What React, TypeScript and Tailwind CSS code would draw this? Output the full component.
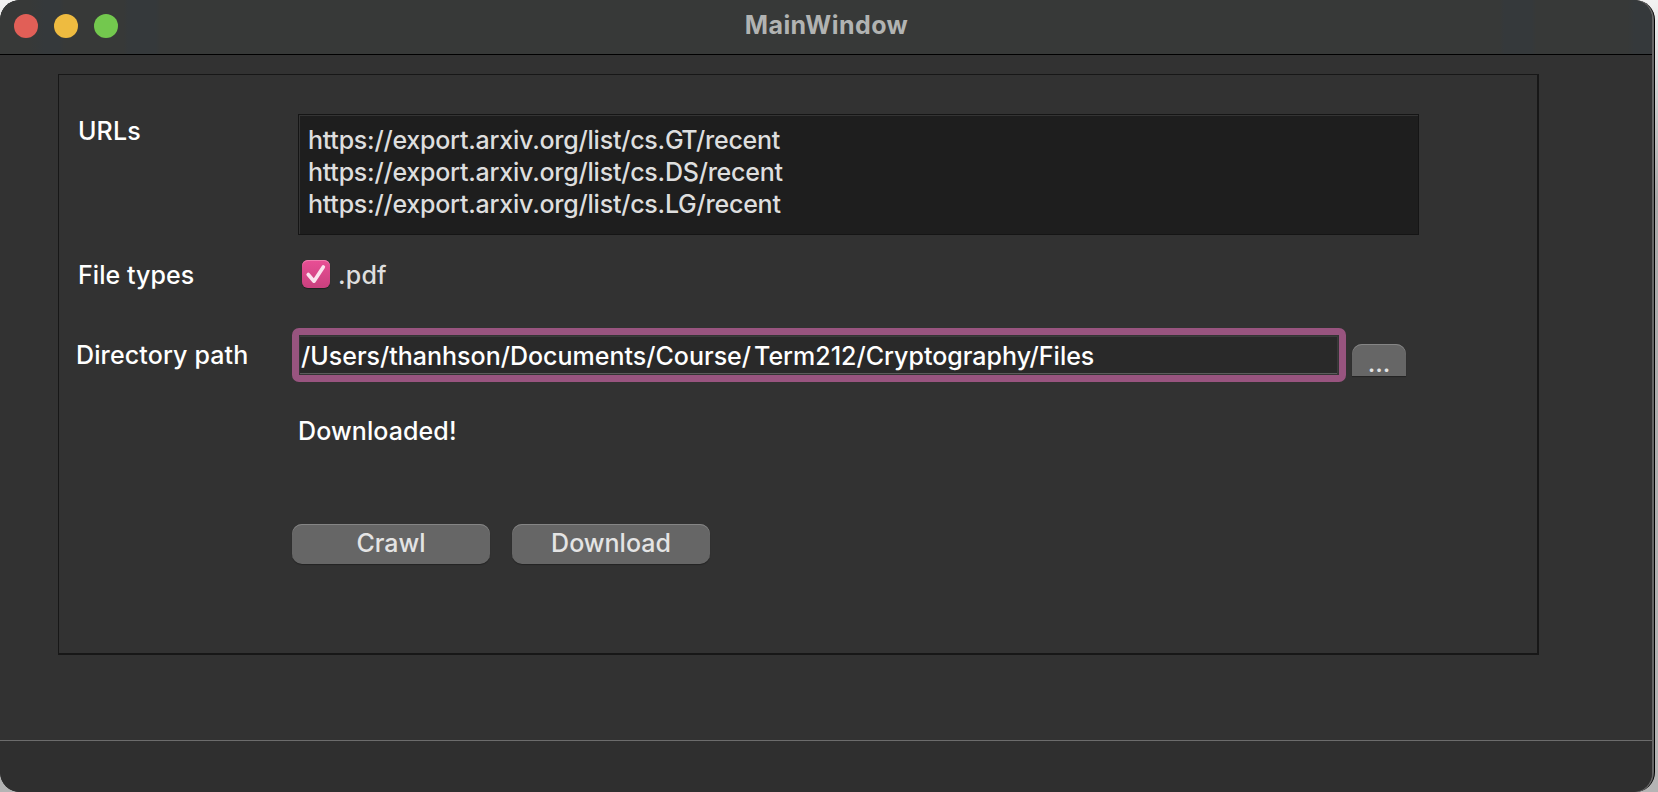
function TrafficLights() {
  return (
    <div className="flex w-[300px] gap-4 pl-3.5">
      <span className="size-6 rounded-full bg-[#e15f57]" />
      <span className="size-6 rounded-full bg-[#eebb40]" />
      <span className="size-6 rounded-full bg-[#73c84e]" />
    </div>
  );
}

function TitleBar() {
  return (
    <header className="flex h-[55px] shrink-0 items-start border-b border-black bg-[#373938] bg-[linear-gradient(90deg,transparent_30px,#35393b_44px,#35393b_60px,transparent_64px,transparent_124px,#35393b_128px,#35393b_156px,transparent_160px,transparent_1500px,#35393b_1504px,#35393b_1532px,transparent_1536px,transparent_1628px,#35393b_1634px)] pt-3.5">
      <TrafficLights />
      <h1 className="-mt-[5px] w-[1053px] text-center text-[25px] leading-8 font-bold tracking-[0.45px] text-[#b1b3b2]">
        MainWindow
      </h1>
    </header>
  );
}

const buttonLook =
  "flex justify-center bg-[#666666] text-[#e4e4e4] shadow-[inset_0_1px_0_#858585,0_1px_1px_rgba(0,0,0,0.3)]";

function PushButton({ label }: { label: string }) {
  return (
    <button className={`${buttonLook} h-10 w-[198px] rounded-[10px] pt-[3px]`}>
      {label}
    </button>
  );
}

function CheckBox() {
  return (
    <span className="size-7 rounded-md bg-linear-to-b from-[#e94f95] to-[#c9407e] shadow-[inset_0_1px_0_#f07fb0,0_1px_1px_rgba(0,0,0,0.4)]">
      <svg viewBox="0 0 28 28" className="size-7" fill="none">
        <path
          d="M6.2 14.5 L12 21.2 L21.3 6.9"
          stroke="#fbe3ee"
          strokeWidth="3.6"
          strokeLinecap="round"
          strokeLinejoin="round"
        />
      </svg>
    </span>
  );
}

export default function App() {
  return (
    <div className="h-[792px] w-[1658px] overflow-hidden bg-linear-to-b from-[#f2f2f2] via-[#a8a8a8] via-25% to-[#b4b4b4] font-['Inter',sans-serif] text-[25px] leading-8 font-medium text-white">
      <div className="h-[792px] w-[1655px] overflow-hidden rounded-[20px] border-r border-black bg-[#666666]">
        <div className="flex h-[792px] w-[1652px] flex-col overflow-hidden rounded-[19px] bg-[#323232]">
          <TitleBar />
          <main className="flex-1 pt-[19px] pl-[58px]">
            <section className="h-[581px] w-[1481px] border-t border-r-2 border-b-2 border-l border-[#171717] pt-[39px]">
              <div className="flex h-[121px]">
                <label className="w-[239px] pt-px pl-[19px] tracking-[0.1px]">URLs</label>
                <div className="w-[1121px] border border-[#151515] bg-[#1e1e1e] pt-[9px] pl-[9px] tracking-[-0.24px] whitespace-nowrap text-[#dedede] shadow-[inset_1px_1px_0_#343434]">
                  <p>
                    https://export.arxiv.org/list/cs.
                    <span className="tracking-[-1.6px]">GT</span>/recent
                  </p>
                  <p>https://export.arxiv.org/list/cs.DS/recent</p>
                  <p>https://export.arxiv.org/list/cs.LG/recent</p>
                </div>
              </div>

              <div className="mt-6 flex h-8">
                <label className="w-[243px] pl-[19px] tracking-[0.05px]">File types</label>
                <div className="flex gap-2 text-[#dedede]">
                  <div className="flex pt-px">
                    <CheckBox />
                  </div>
                  <span className="tracking-[0.2px]">.pdf</span>
                </div>
              </div>

              <div className="mt-[37px] flex h-[54px]">
                <label className="w-[233px] pt-[11px] pl-[17px] tracking-[0.13px]">
                  Directory path
                </label>
                <div className="w-[1054px] rounded-[7px] bg-[#98547f] p-[7px]">
                  <div className="h-10 border border-[#343434] bg-[#292929] pt-[4px] pl-px whitespace-nowrap shadow-[inset_-1px_0_0_#3a3a3a,inset_0_1px_0_#3c3c3c,inset_0_-1px_0_#5c5c5c]">
                    <span>/Users/thanhson/Documents/Course/</span>
                    <span className="ml-[3px]">Term212/Cryptography/Files</span>
                  </div>
                </div>
                <button className={`${buttonLook} mt-4 ml-1.5 h-8 w-[54px] rounded-t-[10px] pt-[3px]`}>
                  ...
                </button>
              </div>

              <p className="mt-[33px] pl-[239px] tracking-[0.1px]">Downloaded!</p>

              <div className="mt-[77px] flex gap-[22px] pl-[233px]">
                <PushButton label="Crawl" />
                <PushButton label="Download" />
              </div>
            </section>
          </main>
          <footer className="h-[52px] shrink-0 border-t border-[#6c6c6c] bg-[#2f2f2f]" />
        </div>
      </div>
    </div>
  );
}
